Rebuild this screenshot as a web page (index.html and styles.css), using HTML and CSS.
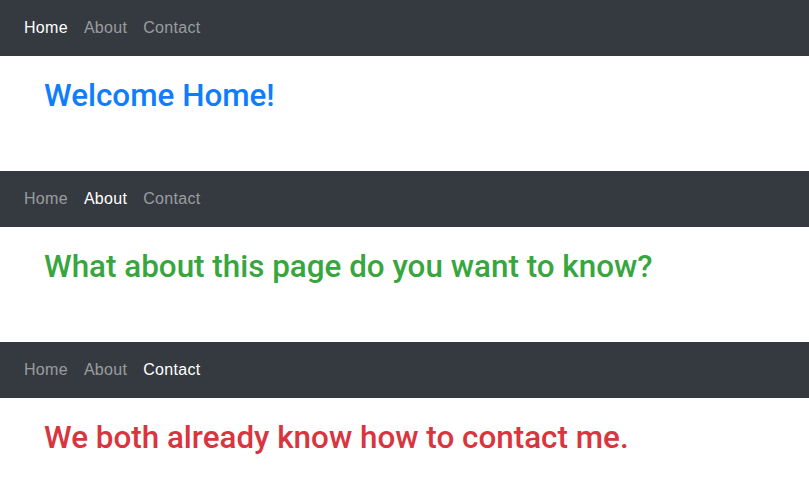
FILE: index.html
```html
<!DOCTYPE html>
<html lang="en">
<head>
<meta charset="utf-8">
<title>Pages</title>
<link rel="stylesheet" href="styles.css">
</head>
<body>
  <section class="page">
    <nav class="navbar">
      <a class="nav-link active" href="#">Home</a>
      <a class="nav-link" href="#">About</a>
      <a class="nav-link" href="#">Contact</a>
    </nav>
    <div class="content">
      <h2 class="title title-primary">Welcome Home!</h2>
    </div>
  </section>
  <section class="page">
    <nav class="navbar">
      <a class="nav-link" href="#">Home</a>
      <a class="nav-link active" href="#">About</a>
      <a class="nav-link" href="#">Contact</a>
    </nav>
    <div class="content">
      <h2 class="title title-success">What about this page do you want to know?</h2>
    </div>
  </section>
  <section class="page">
    <nav class="navbar">
      <a class="nav-link" href="#">Home</a>
      <a class="nav-link" href="#">About</a>
      <a class="nav-link active" href="#">Contact</a>
    </nav>
    <div class="content">
      <h2 class="title title-danger">We both already know how to contact me.</h2>
    </div>
  </section>
</body>
</html>
```

FILE: styles.css
```css
html, body {
  margin: 0;
  padding: 0;
  background: #fff;
  font-family: "Liberation Sans", Arial, sans-serif;
}

.page {
  display: flex;
  flex-direction: column;
}

.navbar {
  display: flex;
  align-items: center;
  height: 56px;
  padding: 0 16px;
  box-sizing: border-box;
  background: #343a40;
}

.nav-link {
  padding: 8px;
  font-size: 16px;
  line-height: 24px;
  letter-spacing: 0.3px;
  color: rgba(255, 255, 255, 0.5);
  text-decoration: none;
}

.nav-link.active {
  color: #fff;
}

.content {
  height: 115px;
  box-sizing: border-box;
  padding: 21px 0 0 44px;
}

.title {
  margin: 0;
  font-family: Roboto, "Liberation Sans", Arial, sans-serif;
  font-size: 31.4px;
  font-weight: 500;
  line-height: 1.2;
}

.title-primary { color: #0f7dfd; }
.title-success { color: #38a63e; }
.title-danger { color: #d9353f; }
```
